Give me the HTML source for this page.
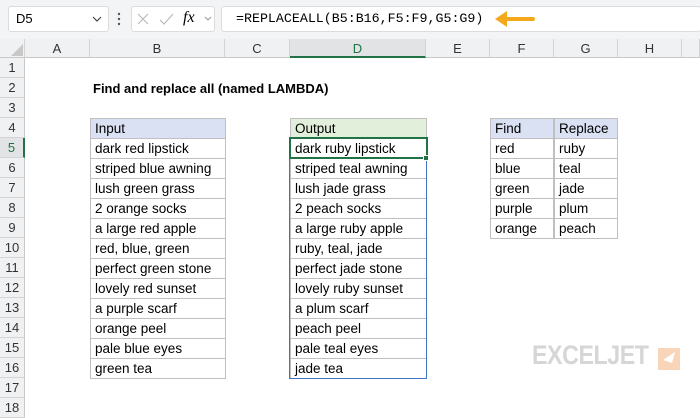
<!DOCTYPE html>
<html><head><style>
*{margin:0;padding:0;box-sizing:border-box}
body{width:700px;height:400px;overflow:hidden;background:#fff;font-family:"Liberation Sans",sans-serif;position:relative}
div{position:absolute}
.t{font-size:13px;color:#000;line-height:20px;white-space:nowrap}
.ch{top:39px;height:19px;background:#f0f1f3;border-right:1px solid #d4d4d4;border-bottom:1px solid #c8c8c8;text-align:center;font-size:13px;line-height:19px;color:#333}
.rh{left:0;width:25px;height:20px;background:#f0f1f3;border-bottom:1px solid #d4d4d4;border-right:1px solid #c8c8c8;text-align:center;font-size:13px;line-height:20px;color:#333}
.c{position:relative!important;height:21px;border:1px solid #bfbfbf;margin:-1px 0 0 -1px;padding-left:4px;font-size:13.5px;line-height:19px;white-space:nowrap;color:#000}
</style></head><body>
<div style="left:0;top:0;width:700px;height:39px;background:#f3f4f6"></div>
<div style="left:8px;top:6px;width:101px;height:26px;background:#fff;border:1px solid #dcdcdc;border-radius:3px;font-size:13px;line-height:24px;padding-left:7px">D5</div>
<div style="left:131px;top:6px;width:84px;height:26px;background:#fff;border:1px solid #dcdcdc;border-radius:3px"></div>
<svg style="position:absolute;left:0;top:0" width="230" height="39">
<circle cx="119" cy="14" r="1.2" fill="#555"/><circle cx="119" cy="19" r="1.2" fill="#555"/><circle cx="119" cy="24" r="1.2" fill="#555"/>
<path d="M93 17l4 4 4-4" stroke="#444" fill="none" stroke-width="1.2"/>
<path d="M138 14l10 10M148 14l-10 10" stroke="#bbb" stroke-width="1.2"/>
<path d="M160 20l4 4 9-10" stroke="#bbb" fill="none" stroke-width="1.2"/>
<path d="M205 17l3 3 3-3" stroke="#999" fill="none" stroke-width="1"/>
</svg>
<div style="left:183px;top:9px;font-family:'Liberation Serif',serif;font-style:italic;font-size:16px">fx</div>
<div style="left:221px;top:6px;width:480px;height:26px;background:#fff;border:1px solid #dcdcdc;border-radius:3px"></div>
<div style="left:236px;top:11px;font-family:'Liberation Mono',monospace;font-size:13.3px;color:#000">=REPLACEALL(B5:B16,F5:F9,G5:G9)</div>
<svg style="position:absolute;left:493px;top:10px" width="46" height="18"><path d="M40 9H12" stroke="#f5a81c" stroke-width="4" stroke-linecap="round"/><path d="M2 9l12-8v16z" fill="#f5a81c"/></svg>

<div class="ch" style="left:0;width:25px"></div>
<svg style="position:absolute;left:10px;top:44px" width="14" height="13"><path d="M13 0V12H1z" fill="#c8c8c8"/></svg>
<div class="ch" style="left:25px;width:65px">A</div>
<div class="ch" style="left:90px;width:135px">B</div>
<div class="ch" style="left:225px;width:65px">C</div>
<div class="ch" style="left:290px;width:136px;background:#e1e3e5;border-bottom:2px solid #217346;color:#217346">D</div>
<div class="ch" style="left:426px;width:64px">E</div>
<div class="ch" style="left:490px;width:64px">F</div>
<div class="ch" style="left:554px;width:64px">G</div>
<div class="ch" style="left:618px;width:64px">H</div>
<div class="ch" style="left:682px;width:18px"></div>

<div class="rh" style="top:58px">1</div><div class="rh" style="top:78px">2</div><div class="rh" style="top:98px">3</div><div class="rh" style="top:118px">4</div>
<div class="rh" style="top:138px;background:#e1e3e5;color:#217346;border-right:2px solid #217346">5</div>
<div class="rh" style="top:158px">6</div><div class="rh" style="top:178px">7</div><div class="rh" style="top:198px">8</div><div class="rh" style="top:218px">9</div><div class="rh" style="top:238px">10</div><div class="rh" style="top:258px">11</div><div class="rh" style="top:278px">12</div><div class="rh" style="top:298px">13</div><div class="rh" style="top:318px">14</div><div class="rh" style="top:338px">15</div><div class="rh" style="top:358px">16</div><div class="rh" style="top:378px">17</div><div class="rh" style="top:398px">18</div>

<div class="t" style="left:93px;top:79px;font-weight:bold">Find and replace all (named LAMBDA)</div>

<div style="left:91px;top:119px;width:135px">
<div class="c" style="background:#d9e1f2">Input</div>
<div class="c">dark red lipstick</div>
<div class="c">striped blue awning</div>
<div class="c">lush green grass</div>
<div class="c">2 orange socks</div>
<div class="c">a large red apple</div>
<div class="c">red, blue, green</div>
<div class="c">perfect green stone</div>
<div class="c">lovely red sunset</div>
<div class="c">a purple scarf</div>
<div class="c">orange peel</div>
<div class="c">pale blue eyes</div>
<div class="c">green tea</div>
</div>

<div style="left:291px;top:119px;width:136px">
<div class="c" style="background:#e2efda">Output</div>
<div class="c">dark ruby lipstick</div>
<div class="c">striped teal awning</div>
<div class="c">lush jade grass</div>
<div class="c">2 peach socks</div>
<div class="c">a large ruby apple</div>
<div class="c">ruby, teal, jade</div>
<div class="c">perfect jade stone</div>
<div class="c">lovely ruby sunset</div>
<div class="c">a plum scarf</div>
<div class="c">peach peel</div>
<div class="c">pale teal eyes</div>
<div class="c">jade tea</div>
</div>
<div style="left:289px;top:138px;width:138px;height:241px;border:1px solid #4472c4;border-top:none"></div>
<div style="left:289px;top:137px;width:139px;height:22px;border:2px solid #217346"></div>
<div style="left:423px;top:155px;width:6px;height:6px;background:#217346;border:1px solid #fff"></div>

<div style="left:491px;top:119px;width:63px">
<div class="c" style="background:#d9e1f2">Find</div>
<div class="c">red</div>
<div class="c">blue</div>
<div class="c">green</div>
<div class="c">purple</div>
<div class="c">orange</div>
</div>
<div style="left:555px;top:119px;width:63px">
<div class="c" style="background:#d9e1f2">Replace</div>
<div class="c">ruby</div>
<div class="c">teal</div>
<div class="c">jade</div>
<div class="c">plum</div>
<div class="c">peach</div>
</div>

<div style="left:532px;top:340px;font-size:27px;font-weight:bold;color:#d6d6d6;letter-spacing:-0.5px;transform:scaleX(0.86);transform-origin:left">EXCELJET</div>
<svg style="position:absolute;left:658px;top:348px" width="22" height="22"><rect width="22" height="22" fill="#f8d5b8"/><path d="M17 4L5 12l9 3z" fill="#fff"/></svg>
</body></html>
